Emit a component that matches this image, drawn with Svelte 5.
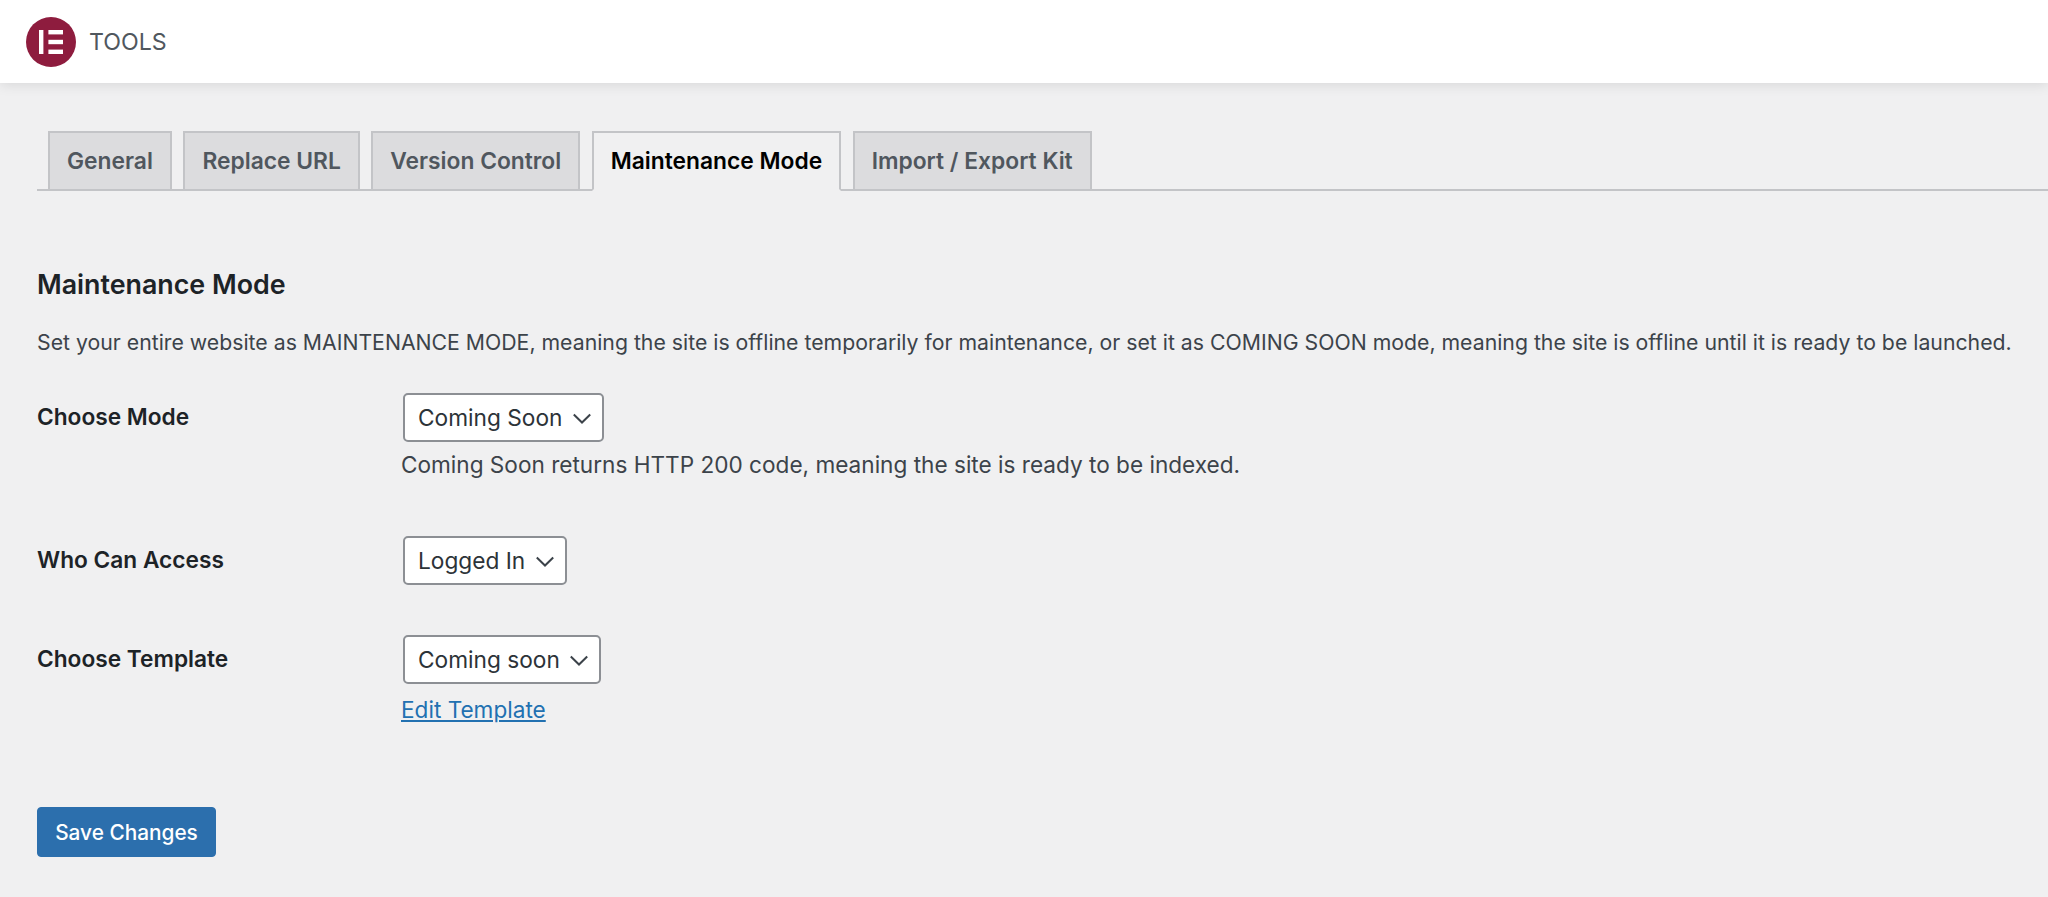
<script>
  const tabs = ["General", "Replace URL", "Version Control", "Maintenance Mode", "Import / Export Kit"];
  const activeTab = "Maintenance Mode";

  const fields = [
    { label: "Choose Mode", value: "Coming Soon", help: "Coming Soon returns HTTP 200 code, meaning the site is ready to be indexed.", cls: "mode" },
    { label: "Who Can Access", value: "Logged In", cls: "access" },
    { label: "Choose Template", value: "Coming soon", link: "Edit Template", cls: "template" }
  ];
</script>

<header class="topbar">
  <svg class="logo" viewBox="0 0 50 50" aria-hidden="true">
    <circle cx="25" cy="25" r="25" fill="#8e1c3e" />
    <rect x="13" y="13" width="4.4" height="24" fill="#fff" />
    <rect x="22.4" y="13" width="14.6" height="4.4" fill="#fff" />
    <rect x="22.4" y="22.8" width="14.6" height="4.4" fill="#fff" />
    <rect x="22.4" y="32.6" width="14.6" height="4.4" fill="#fff" />
  </svg>
  <span class="title">TOOLS</span>
</header>

<main class="page">
  <nav class="tabs">
    {#each tabs as tab}
      <a href="#{tab}" class="tab" class:active={tab === activeTab}>{tab}</a>
    {/each}
  </nav>

  <h2>Maintenance Mode</h2>
  <p class="intro">Set your entire website as MAINTENANCE MODE, meaning the site is offline temporarily for maintenance, or set it as COMING SOON mode, meaning the site is offline until it is ready to be launched.</p>

  <form class="fields" on:submit|preventDefault>
    {#each fields as field}
      <div class="row {field.cls}">
        <label for={field.cls}>{field.label}</label>
        <div class="control">
          <span class="select">
            <select id={field.cls}><option>{field.value}</option></select>
            <svg class="chevron" viewBox="0 0 20 20" aria-hidden="true"><path d="M1.8 6.5 10 14.5 18.2 6.5" fill="none" stroke="#3c434a" stroke-width="2" /></svg>
          </span>
          {#if field.help}<p class="help">{field.help}</p>{/if}
          {#if field.link}<a class="edit" href="#edit">{field.link}</a>{/if}
        </div>
      </div>
    {/each}
    <button type="submit" class="save">Save Changes</button>
  </form>
</main>

<style>
  :global(body) {
    background: #f0f0f1;
    font-family: Inter, "Liberation Sans", sans-serif;
    color: #3c434a;
  }

  .topbar {
    display: flex;
    align-items: center;
    gap: 13px;
    height: 83px;
    padding-left: 26px;
    background: #fff;
    box-shadow: 0 2px 12px rgba(0, 0, 0, 0.1);
    box-sizing: border-box;
  }
  .logo {
    width: 50px;
    height: 50px;
    flex: none;
  }
  .title {
    font-size: 23.2px;
    color: #50575e;
  }

  .page {
    padding: 48px 0 0 37px;
  }

  .tabs {
    display: flex;
    gap: 11.5px;
    padding-left: 11px;
    border-bottom: 2px solid #c3c4c7;
    height: 57.5px;
  }
  .tab {
    box-sizing: border-box;
    height: 59.5px;
    padding: 0 17px;
    display: flex;
    align-items: center;
    background: #dcdcde;
    border: 2px solid #c3c4c7;
    color: #50575e;
    font-size: 22.8px;
    font-weight: 600;
    text-decoration: none;
    white-space: nowrap;
  }
  .tab.active {
    background: #f0f0f1;
    border-bottom-color: #f0f0f1;
    color: #000;
  }

  h2 {
    margin: 77.5px 0 0;
    font-size: 26.8px;
    line-height: 32px;
    font-weight: 600;
    color: #1d2327;
  }
  .intro {
    margin: 28px 0 0;
    font-size: 21.25px;
    line-height: 29px;
    white-space: nowrap;
  }

  .fields {
    margin-top: 36px;
  }
  .row {
    display: grid;
    grid-template-columns: 366px 1fr;
  }
  .row.mode {
    height: 142.7px;
  }
  .row.access {
    height: 99.3px;
  }
  .row.template {
    height: 172px;
  }
  label {
    font-size: 22.7px;
    line-height: 26px;
    font-weight: 600;
    color: #1d2327;
    padding-top: 11px;
  }
  .select {
    position: relative;
    display: inline-block;
    height: 49px;
  }
  select {
    appearance: none;
    box-sizing: border-box;
    height: 49px;
    padding: 0 38.7px 0 13px;
    background: #fff;
    border: 2px solid #8c8f94;
    border-radius: 5px;
    font: 22.7px Inter, "Liberation Sans", sans-serif;
    color: #2c3338;
  }
  .chevron {
    position: absolute;
    right: 12px;
    top: 15px;
    width: 20px;
    height: 20px;
    pointer-events: none;
  }
  .help {
    margin: 8px 0 0 -2px;
    font-size: 22.6px;
    line-height: 30px;
  }
  .edit {
    display: block;
    margin: 12px 0 0 -2px;
    font-size: 22.6px;
    line-height: 28px;
    color: #2271b1;
  }
  .control {
    min-width: 0;
  }

  .save {
    display: block;
    box-sizing: border-box;
    width: 179px;
    height: 50px;
    padding: 1px 0 0;
    background: #2c6fad;
    border: 1px solid #2c6fad;
    border-radius: 4px;
    color: #fff;
    font: 500 20.8px Inter, "Liberation Sans", sans-serif;
  }
</style>
